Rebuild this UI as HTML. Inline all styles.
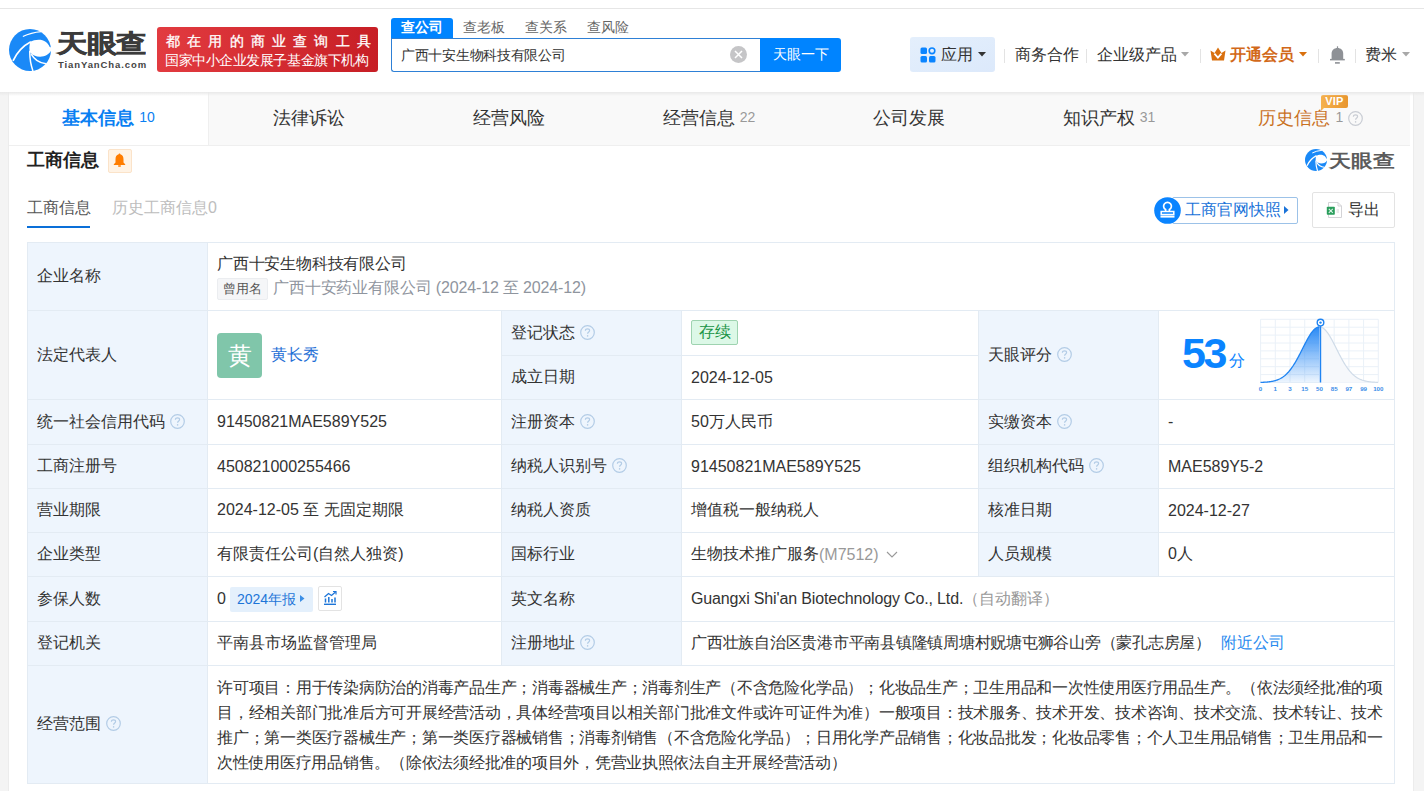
<!DOCTYPE html>
<html><head><meta charset="utf-8">
<style>
*{margin:0;padding:0;box-sizing:border-box}
html,body{width:1424px;height:791px;overflow:hidden}
body{background:#f4f4f4;font-family:"Liberation Sans",sans-serif;color:#333;position:relative}
.a{position:absolute;white-space:nowrap}
#hdr{position:absolute;left:0;top:0;width:1424px;height:92px;background:#fff;border-top:0}
#topline{position:absolute;left:0;top:8px;width:1424px;height:1px;background:#e6e6e6}
#card{position:absolute;left:9px;top:92px;width:1404px;height:699px;background:#fff}
#cardl{position:absolute;left:8px;top:92px;width:1px;height:699px;background:#ececec}
#cardr{position:absolute;left:1413px;top:92px;width:1px;height:699px;background:#ececec}
.shadow{position:absolute;left:0;top:92px;width:1424px;height:4px;background:linear-gradient(#e9e9e9,rgba(240,240,240,0))}
.tabs{position:absolute;left:9px;top:92px;width:1401px;height:54px;background:#f9f9f9;border-bottom:1px solid #efefef}
.tab{position:absolute;top:0;height:53px;width:200px;text-align:center;font-size:18px;line-height:53px;color:#333}
.tab .n{font-size:14px;color:#999;margin-left:5px;position:relative;top:-2px}
.cell{position:absolute;background:#fff}
.lab{background:#edf4fc}
.hl{position:absolute;height:1px;background:#e4ecf4}
.vl{position:absolute;width:1px;background:#e4ecf4}
.t16{font-size:16px;line-height:20px}
.q{display:inline-block;width:15px;height:15px;margin-left:5px;line-height:0;position:relative;top:-1px}
.q svg{display:block}
.c{position:absolute;display:flex;align-items:center;white-space:nowrap;font-size:16px;color:#333}
</style></head><body>
<div id="hdr">
 <svg class="a" style="left:9px;top:29px" width="42" height="42" viewBox="0 0 100 100">
  <circle cx="50" cy="50" r="50" fill="#1a89f7"/>
  <path d="M50.8 30.3 C60 26 76 22 88 31 C93 35 95 39 96.5 42 L100 44 L100 52 C96 60 86 66 74 66 C64 66 55 62 50.5 56 C47.5 50 48 40 50.8 30.3Z" fill="#fff"/>
  <path d="M9.5 76 Q24 45 52 30.5" stroke="#fff" stroke-width="4.0" fill="none"/>
  <path d="M33 18 Q52 8 77 6" stroke="#fff" stroke-width="3.0" fill="none"/>
  <path d="M49.5 52 Q49 78 57 100" stroke="#fff" stroke-width="3.6" fill="none"/>
  <path d="M53 60 Q64 80 88 83" stroke="#fff" stroke-width="3.6" fill="none"/>
 </svg>
 <div class="a" style="left:57px;top:24px;font-size:30px;line-height:40px;font-weight:bold;color:#3b3b3b;letter-spacing:-0.5px;-webkit-text-stroke:0.7px #3b3b3b;transform:scaleY(0.82);transform-origin:0 50%">天眼查</div>
 <div class="a" style="left:58px;top:59px;font-size:9.5px;line-height:12px;font-weight:bold;color:#444;letter-spacing:0.9px">TianYanCha.com</div>
 <div class="a" style="left:157px;top:27px;width:221px;height:45px;border-radius:3px;background:linear-gradient(90deg,#e23b40,#c71e25)"></div>
 <div class="a" style="left:166px;top:31px;font-size:14px;line-height:20px;color:#fff;letter-spacing:7.2px;-webkit-text-stroke:0.3px #fff">都在用的商业查询工具</div>
 <div class="a" style="left:165px;top:50px;font-size:14px;line-height:20px;color:#fff;letter-spacing:-0.45px">国家中小企业发展子基金旗下机构</div>
 <div class="a" style="left:391px;top:18px;width:62px;height:21px;background:#0084ff;border-radius:3px 3px 0 0"></div>
 <div class="a" style="left:401px;top:17px;font-size:14px;line-height:20px;color:#fff;font-weight:bold">查公司</div>
 <div class="a" style="left:463px;top:17px;font-size:14px;line-height:20px;color:#666">查老板</div>
 <div class="a" style="left:525px;top:17px;font-size:14px;line-height:20px;color:#666">查关系</div>
 <div class="a" style="left:587px;top:17px;font-size:14px;line-height:20px;color:#666">查风险</div>
 <div class="a" style="left:391px;top:38px;width:370px;height:34px;border:1px solid #2e80d6;border-right:0;border-radius:0 0 0 3px;background:#fff"></div>
 <div class="a" style="left:401px;top:45px;font-size:14px;line-height:20px;color:#333;letter-spacing:-0.3px">广西十安生物科技有限公司</div>
 <div class="a" style="left:730px;top:46px;width:17px;height:17px;border-radius:50%;background:#c5c5c7"></div>
 <svg class="a" style="left:730px;top:46px" width="17" height="17" viewBox="0 0 17 17"><path d="M5 5L12 12M12 5L5 12" stroke="#fff" stroke-width="1.5"/></svg>
 <div class="a" style="left:760px;top:38px;width:81px;height:34px;background:#0084ff;border-radius:0 3px 3px 0"></div>
 <div class="a" style="left:773px;top:44px;font-size:14px;line-height:20px;color:#fff">天眼一下</div>
 <div class="a" style="left:910px;top:37px;width:85px;height:35px;background:linear-gradient(160deg,#e4effc,#dce9fb);border-radius:3px"></div>
 <svg class="a" style="left:920px;top:47px" width="16" height="16" viewBox="0 0 16 16"><rect x="0.5" y="0.5" width="6.5" height="6.5" rx="1.5" fill="#0a84ff"/><circle cx="12" cy="3.8" r="2.8" fill="none" stroke="#0a84ff" stroke-width="1.6"/><rect x="0.5" y="9" width="6.5" height="6.5" rx="1.5" fill="#0a84ff"/><rect x="9" y="9" width="6.5" height="6.5" rx="1.5" fill="#0a84ff"/></svg>
 <div class="a" style="left:941px;top:44px;font-size:16px;line-height:22px;color:#333">应用</div>
 <svg class="a" style="left:978px;top:52px" width="8" height="5" viewBox="0 0 8 5"><path d="M0 0H8L4 4.5Z" fill="#333"/></svg>
 <div class="a" style="left:1004px;top:49px;width:1px;height:14px;background:#e3e3e3"></div>
 <div class="a" style="left:1015px;top:44px;font-size:16px;line-height:22px;color:#333">商务合作</div>
 <div class="a" style="left:1086px;top:49px;width:1px;height:14px;background:#e3e3e3"></div>
 <div class="a" style="left:1097px;top:44px;font-size:16px;line-height:22px;color:#333">企业级产品</div>
 <svg class="a" style="left:1181px;top:52px" width="8" height="5" viewBox="0 0 8 5"><path d="M0 0H8L4 4.5Z" fill="#a8a8a8"/></svg>
 <div class="a" style="left:1200px;top:49px;width:1px;height:14px;background:#e3e3e3"></div>
 <svg class="a" style="left:1210px;top:47px" width="16" height="14" viewBox="0 0 16 14"><path d="M0.5 3.5L4.5 6L8 0.5L11.5 6L15.5 3.5L14 13.5H2Z" fill="#d9700e"/><path d="M4.4 6.6L7.9 10.6L11.4 6.6" stroke="#fff" stroke-width="1.7" fill="none"/></svg>
 <div class="a" style="left:1230px;top:44px;font-size:16px;line-height:22px;color:#d2691a;font-weight:bold">开通会员</div>
 <svg class="a" style="left:1299px;top:52px" width="8" height="5" viewBox="0 0 8 5"><path d="M0 0H8L4 4.5Z" fill="#d9700e"/></svg>
 <div class="a" style="left:1318px;top:49px;width:1px;height:14px;background:#e3e3e3"></div>
 <svg class="a" style="left:1330px;top:46px" width="15" height="18" viewBox="0 0 15 18"><rect x="6.9" y="0.3" width="1.2" height="2.2" fill="#8e9196"/><path d="M1.6 13.2V7.5C1.6 4 4.2 1.9 7.5 1.9C10.8 1.9 13.2 4 13.2 7.5V13.2Z" fill="#8e9196"/><rect x="0" y="12.9" width="14.8" height="1.5" fill="#8e9196"/><rect x="5" y="16.1" width="4.8" height="1.6" fill="#8e9196"/></svg>
 <div class="a" style="left:1355px;top:49px;width:1px;height:14px;background:#e3e3e3"></div>
 <div class="a" style="left:1365px;top:44px;font-size:16px;line-height:22px;color:#333">费米</div>
 <svg class="a" style="left:1402px;top:52px" width="8" height="5" viewBox="0 0 8 5"><path d="M0 0H8L4 4.5Z" fill="#a8a8a8"/></svg>
</div>
<div id="topline"></div>
<div id="cardl"></div>
<div id="card"></div>
<div id="cardr"></div>
<div class="tabs">
  <div class="tab" style="left:0;width:199px;height:53px;background:#fff;color:#0a7ff2;font-weight:bold">基本信息<span class="n" style="color:#0a7ff2;font-weight:normal">10</span></div>
  <div class="a" style="left:199px;top:0;width:1px;height:53px;background:#efefef"></div>
  <div class="tab" style="left:200px">法律诉讼</div>
  <div class="tab" style="left:400px">经营风险</div>
  <div class="tab" style="left:600px">经营信息<span class="n">22</span></div>
  <div class="tab" style="left:800px">公司发展</div>
  <div class="tab" style="left:1000px">知识产权<span class="n">31</span></div>
  <div class="tab" style="left:1200px;color:#c9711f;padding-left:3px">历史信息<span class="n" style="margin-left:6px">1</span><svg style="margin-left:5px;vertical-align:-2px" width="15" height="15" viewBox="0 0 15 15"><circle cx="7.5" cy="7.5" r="6.8" fill="none" stroke="#c9cdd4" stroke-width="1.2"/><path d="M5.4 5.8C5.4 4.5 6.3 3.8 7.5 3.8C8.7 3.8 9.6 4.5 9.6 5.6C9.6 7 7.6 7 7.6 8.8" fill="none" stroke="#c9cdd4" stroke-width="1.2"/><circle cx="7.6" cy="10.9" r="0.8" fill="#c9cdd4"/></svg></div>
  <div class="a" style="left:1312px;top:3px;width:27px;height:13px;border-radius:2px 2px 2px 0;background:linear-gradient(90deg,#f5b14e,#e8962f)"></div><svg class="a" style="left:1312px;top:15px" width="4" height="4" viewBox="0 0 4 4"><path d="M0 0H4L0 4Z" fill="#f5b14e"/></svg>
  <div class="a" style="left:1312px;top:3px;width:27px;height:13px;font-size:11px;line-height:13px;text-align:center;color:#fff;font-weight:bold;letter-spacing:0.2px">VIP</div>
</div>
<div class="shadow"></div>
<div id="sec">
 <div class="a" style="left:27px;top:148px;font-size:18px;line-height:24px;font-weight:bold;color:#222">工商信息</div>
 <div class="a" style="left:108px;top:149px;width:24px;height:24px;background:#fff3e5;border:1px solid #fbe3c9;border-radius:2px"></div>
 <svg class="a" style="left:113px;top:153px" width="13" height="14" viewBox="0 0 13 14"><path d="M6.5 0.5C7.1 0.5 7.3 0.9 7.3 1.3C9.6 1.9 10.5 3.9 10.5 6.4V9.5L12.2 11.3V12H0.8V11.3L2.5 9.5V6.4C2.5 3.9 3.4 1.9 5.7 1.3C5.7 0.9 5.9 0.5 6.5 0.5Z" fill="#ff7d00"/><rect x="5" y="12.3" width="3" height="1.5" rx="0.7" fill="#ff7d00"/></svg>
 <div class="a" style="left:27px;top:197px;font-size:16px;line-height:22px;color:#555">工商信息</div>
 <div class="a" style="left:112px;top:197px;font-size:16px;line-height:22px;color:#bdbdbd">历史工商信息0</div>
 <div class="a" style="left:27px;top:226px;width:63px;height:2px;background:#0a6fd8"></div>
 <svg class="a" style="left:1305px;top:149px" width="22" height="22" viewBox="0 0 100 100">
  <circle cx="50" cy="50" r="50" fill="#1a89f7"/>
  <path d="M50.8 30.3 C60 26 76 22 88 31 C93 35 95 39 96.5 42 L100 44 L100 52 C96 60 86 66 74 66 C64 66 55 62 50.5 56 C47.5 50 48 40 50.8 30.3Z" fill="#fff"/>
  <path d="M9.5 76 Q24 45 52 30.5" stroke="#fff" stroke-width="6.0" fill="none"/>
  <path d="M33 18 Q52 8 77 6" stroke="#fff" stroke-width="4.5" fill="none"/>
  <path d="M49.5 52 Q49 78 57 100" stroke="#fff" stroke-width="5.4" fill="none"/>
  <path d="M53 60 Q64 80 88 83" stroke="#fff" stroke-width="5.4" fill="none"/>
 </svg>
 <div class="a" style="left:1329px;top:146px;font-size:22px;line-height:30px;font-weight:bold;color:#5c5c5c;transform:scaleY(0.82);transform-origin:0 50%">天眼查</div>
 <div class="a" style="left:1172px;top:197px;width:126px;height:27px;border:1px solid #9cc2e8;border-radius:2px;background:#fff"></div>
 <svg class="a" style="left:1154px;top:197px" width="27" height="27" viewBox="0 0 27 27"><circle cx="13.5" cy="13.5" r="13.3" fill="#0a84ff"/><path d="M11.6 14.2V12.6A3.9 3.9 0 1 1 15.4 12.6V14.2" fill="none" stroke="#fff" stroke-width="1.7"/><rect x="7.2" y="14.5" width="12.6" height="3" fill="none" stroke="#fff" stroke-width="1.5"/><rect x="6.5" y="18.6" width="14" height="2" fill="#fff"/></svg>
 <div class="a" style="left:1185px;top:199px;font-size:16px;line-height:22px;color:#1a73d9">工商官网快照</div>
 <svg class="a" style="left:1284px;top:206px" width="5" height="8" viewBox="0 0 5 8"><path d="M0 0L4.5 4L0 8Z" fill="#1a73d9"/></svg>
 <div class="a" style="left:1312px;top:192px;width:83px;height:36px;border:1px solid #e3e3e3;border-radius:2px;background:#fff"></div>
 <svg class="a" style="left:1326px;top:201px" width="16" height="18" viewBox="0 0 16 18"><path d="M2.5 1.5H12L15.5 5V16.5H2.5Z" fill="#fff" stroke="#d3d3d6"/><path d="M12 1.5V5H15.5" fill="none" stroke="#d3d3d6"/><rect x="0.8" y="5.8" width="8" height="8" rx="0.8" fill="#2a9e5c"/><path d="M2.8 7.8L6.8 11.8M6.8 7.8L2.8 11.8" stroke="#dff5e8" stroke-width="1.1"/><path d="M10.5 9H13M10.5 11H13" stroke="#d5d5d5" stroke-width="1.2"/></svg>
 <div class="a" style="left:1348px;top:199px;font-size:16px;line-height:22px;color:#333">导出</div>
</div>

<div id="tbl"><!--TABLE-->
<div class="a" style="left:27px;top:242px;width:180px;height:541px;background:#eef5fd"></div>
<div class="a" style="left:501px;top:310px;width:180px;height:355px;background:#eef5fd"></div>
<div class="a" style="left:978px;top:310px;width:180px;height:266px;background:#eef5fd"></div>
<div class="a" style="left:27px;top:242px;width:1368px;height:1px;background:#e3ebf3"></div>
<div class="a" style="left:27px;top:310px;width:1368px;height:1px;background:#e3ebf3"></div>
<div class="a" style="left:27px;top:399px;width:1368px;height:1px;background:#e3ebf3"></div>
<div class="a" style="left:27px;top:444px;width:1368px;height:1px;background:#e3ebf3"></div>
<div class="a" style="left:27px;top:488px;width:1368px;height:1px;background:#e3ebf3"></div>
<div class="a" style="left:27px;top:532px;width:1368px;height:1px;background:#e3ebf3"></div>
<div class="a" style="left:27px;top:576px;width:1368px;height:1px;background:#e3ebf3"></div>
<div class="a" style="left:27px;top:621px;width:1368px;height:1px;background:#e3ebf3"></div>
<div class="a" style="left:27px;top:665px;width:1368px;height:1px;background:#e3ebf3"></div>
<div class="a" style="left:27px;top:783px;width:1368px;height:1px;background:#e3ebf3"></div>
<div class="a" style="left:501px;top:355px;width:477px;height:1px;background:#e3ebf3"></div>
<div class="a" style="left:27px;top:242px;width:1px;height:541px;background:#e3ebf3"></div>
<div class="a" style="left:207px;top:242px;width:1px;height:541px;background:#e3ebf3"></div>
<div class="a" style="left:501px;top:310px;width:1px;height:355px;background:#e3ebf3"></div>
<div class="a" style="left:681px;top:310px;width:1px;height:355px;background:#e3ebf3"></div>
<div class="a" style="left:978px;top:310px;width:1px;height:266px;background:#e3ebf3"></div>
<div class="a" style="left:1158px;top:310px;width:1px;height:266px;background:#e3ebf3"></div>
<div class="a" style="left:1394px;top:242px;width:1px;height:542px;background:#e3ebf3"></div>
<div class="c" style="left:37px;top:243px;height:67px;">企业名称</div>
<div class="c" style="left:37px;top:311px;height:88px;">法定代表人</div>
<div class="c" style="left:37px;top:400px;height:44px;">统一社会信用代码<span class="q"><svg width="15" height="15" viewBox="0 0 15 15"><circle cx="7.5" cy="7.5" r="6.8" fill="none" stroke="#b3cce6" stroke-width="1.2"/><path d="M5.4 5.8C5.4 4.5 6.3 3.8 7.5 3.8C8.7 3.8 9.6 4.5 9.6 5.6C9.6 7 7.6 7 7.6 8.8" fill="none" stroke="#b3cce6" stroke-width="1.2"/><circle cx="7.6" cy="10.9" r="0.8" fill="#b3cce6"/></svg></span></div>
<div class="c" style="left:37px;top:445px;height:43px;">工商注册号</div>
<div class="c" style="left:37px;top:489px;height:43px;">营业期限</div>
<div class="c" style="left:37px;top:533px;height:43px;">企业类型</div>
<div class="c" style="left:37px;top:577px;height:44px;">参保人数</div>
<div class="c" style="left:37px;top:622px;height:43px;">登记机关</div>
<div class="c" style="left:37px;top:666px;height:117px;">经营范围<span class="q"><svg width="15" height="15" viewBox="0 0 15 15"><circle cx="7.5" cy="7.5" r="6.8" fill="none" stroke="#b3cce6" stroke-width="1.2"/><path d="M5.4 5.8C5.4 4.5 6.3 3.8 7.5 3.8C8.7 3.8 9.6 4.5 9.6 5.6C9.6 7 7.6 7 7.6 8.8" fill="none" stroke="#b3cce6" stroke-width="1.2"/><circle cx="7.6" cy="10.9" r="0.8" fill="#b3cce6"/></svg></span></div>
<div class="c" style="left:511px;top:311px;height:44px;">登记状态<span class="q"><svg width="15" height="15" viewBox="0 0 15 15"><circle cx="7.5" cy="7.5" r="6.8" fill="none" stroke="#b3cce6" stroke-width="1.2"/><path d="M5.4 5.8C5.4 4.5 6.3 3.8 7.5 3.8C8.7 3.8 9.6 4.5 9.6 5.6C9.6 7 7.6 7 7.6 8.8" fill="none" stroke="#b3cce6" stroke-width="1.2"/><circle cx="7.6" cy="10.9" r="0.8" fill="#b3cce6"/></svg></span></div>
<div class="c" style="left:511px;top:356px;height:43px;">成立日期</div>
<div class="c" style="left:511px;top:400px;height:44px;">注册资本<span class="q"><svg width="15" height="15" viewBox="0 0 15 15"><circle cx="7.5" cy="7.5" r="6.8" fill="none" stroke="#b3cce6" stroke-width="1.2"/><path d="M5.4 5.8C5.4 4.5 6.3 3.8 7.5 3.8C8.7 3.8 9.6 4.5 9.6 5.6C9.6 7 7.6 7 7.6 8.8" fill="none" stroke="#b3cce6" stroke-width="1.2"/><circle cx="7.6" cy="10.9" r="0.8" fill="#b3cce6"/></svg></span></div>
<div class="c" style="left:511px;top:445px;height:43px;">纳税人识别号<span class="q"><svg width="15" height="15" viewBox="0 0 15 15"><circle cx="7.5" cy="7.5" r="6.8" fill="none" stroke="#b3cce6" stroke-width="1.2"/><path d="M5.4 5.8C5.4 4.5 6.3 3.8 7.5 3.8C8.7 3.8 9.6 4.5 9.6 5.6C9.6 7 7.6 7 7.6 8.8" fill="none" stroke="#b3cce6" stroke-width="1.2"/><circle cx="7.6" cy="10.9" r="0.8" fill="#b3cce6"/></svg></span></div>
<div class="c" style="left:511px;top:489px;height:43px;">纳税人资质</div>
<div class="c" style="left:511px;top:533px;height:43px;">国标行业</div>
<div class="c" style="left:511px;top:577px;height:44px;">英文名称</div>
<div class="c" style="left:511px;top:622px;height:43px;">注册地址<span class="q"><svg width="15" height="15" viewBox="0 0 15 15"><circle cx="7.5" cy="7.5" r="6.8" fill="none" stroke="#b3cce6" stroke-width="1.2"/><path d="M5.4 5.8C5.4 4.5 6.3 3.8 7.5 3.8C8.7 3.8 9.6 4.5 9.6 5.6C9.6 7 7.6 7 7.6 8.8" fill="none" stroke="#b3cce6" stroke-width="1.2"/><circle cx="7.6" cy="10.9" r="0.8" fill="#b3cce6"/></svg></span></div>
<div class="c" style="left:988px;top:311px;height:88px;">天眼评分<span class="q"><svg width="15" height="15" viewBox="0 0 15 15"><circle cx="7.5" cy="7.5" r="6.8" fill="none" stroke="#b3cce6" stroke-width="1.2"/><path d="M5.4 5.8C5.4 4.5 6.3 3.8 7.5 3.8C8.7 3.8 9.6 4.5 9.6 5.6C9.6 7 7.6 7 7.6 8.8" fill="none" stroke="#b3cce6" stroke-width="1.2"/><circle cx="7.6" cy="10.9" r="0.8" fill="#b3cce6"/></svg></span></div>
<div class="c" style="left:988px;top:400px;height:44px;">实缴资本<span class="q"><svg width="15" height="15" viewBox="0 0 15 15"><circle cx="7.5" cy="7.5" r="6.8" fill="none" stroke="#b3cce6" stroke-width="1.2"/><path d="M5.4 5.8C5.4 4.5 6.3 3.8 7.5 3.8C8.7 3.8 9.6 4.5 9.6 5.6C9.6 7 7.6 7 7.6 8.8" fill="none" stroke="#b3cce6" stroke-width="1.2"/><circle cx="7.6" cy="10.9" r="0.8" fill="#b3cce6"/></svg></span></div>
<div class="c" style="left:988px;top:445px;height:43px;">组织机构代码<span class="q"><svg width="15" height="15" viewBox="0 0 15 15"><circle cx="7.5" cy="7.5" r="6.8" fill="none" stroke="#b3cce6" stroke-width="1.2"/><path d="M5.4 5.8C5.4 4.5 6.3 3.8 7.5 3.8C8.7 3.8 9.6 4.5 9.6 5.6C9.6 7 7.6 7 7.6 8.8" fill="none" stroke="#b3cce6" stroke-width="1.2"/><circle cx="7.6" cy="10.9" r="0.8" fill="#b3cce6"/></svg></span></div>
<div class="c" style="left:988px;top:489px;height:43px;">核准日期</div>
<div class="c" style="left:988px;top:533px;height:43px;">人员规模</div>
<div class="c" style="left:217px;top:400px;height:44px;">91450821MAE589Y525</div>
<div class="c" style="left:217px;top:445px;height:43px;">450821000255466</div>
<div class="c" style="left:217px;top:489px;height:43px;">2024-12-05 至 无固定期限</div>
<div class="c" style="left:217px;top:533px;height:43px;">有限责任公司(自然人独资)</div>
<div class="c" style="left:217px;top:622px;height:43px;">平南县市场监督管理局</div>
<div class="c" style="left:691px;top:400px;height:44px;">50万人民币</div>
<div class="c" style="left:691px;top:445px;height:43px;">91450821MAE589Y525</div>
<div class="c" style="left:691px;top:489px;height:43px;">增值税一般纳税人</div>
<div class="c" style="left:691px;top:533px;height:43px;">生物技术推广服务<span style="color:#999"> (M7512)</span><svg style="margin-left:7px" width="12" height="7" viewBox="0 0 12 7"><path d="M1 1L6 6L11 1" fill="none" stroke="#999" stroke-width="1.1"/></svg></div>
<div class="c" style="left:691px;top:577px;height:44px;"><span style="letter-spacing:-0.15px">Guangxi Shi'an Biotechnology Co., Ltd.</span><span style="color:#999"> （自动翻译）</span></div>
<div class="c" style="left:691px;top:622px;height:43px;"><span style="letter-spacing:-0.25px">广西壮族自治区贵港市平南县镇隆镇周塘村贶塘屯狮谷山旁（蒙孔志房屋）</span><span style="color:#2a8bef;margin-left:10px">附近公司</span></div>
<div class="c" style="left:691px;top:356px;height:43px;">2024-12-05</div>
<div class="c" style="left:1168px;top:400px;height:44px;">-</div>
<div class="c" style="left:1168px;top:445px;height:43px;">MAE589Y5-2</div>
<div class="c" style="left:1168px;top:489px;height:43px;">2024-12-27</div>
<div class="c" style="left:1168px;top:533px;height:43px;">0人</div>
<div class="a" style="left:217px;top:253px;font-size:16px;line-height:22px;color:#333;letter-spacing:-0.2px">广西十安生物科技有限公司</div>
<div class="a" style="left:217px;top:278px;width:51px;height:22px;background:#f5f6f8;border:1px solid #ebedf0;border-radius:2px"></div>
<div class="a" style="left:223px;top:279px;font-size:13px;line-height:19px;color:#555">曾用名</div>
<div class="a" style="left:273px;top:277px;font-size:16px;line-height:22px;color:#8f959e;letter-spacing:-0.15px">广西十安药业有限公司 (2024-12 至 2024-12)</div>
<div class="a" style="left:217px;top:333px;width:45px;height:45px;background:#80c6aa;border-radius:4px"></div>
<div class="a" style="left:217px;top:333px;width:45px;height:45px;font-size:24px;line-height:45px;text-align:center;color:#fff">黄</div>
<div class="a" style="left:271px;top:344px;font-size:16px;line-height:22px;color:#1f70d6">黄长秀</div>
<div class="a" style="left:691px;top:320px;width:47px;height:25px;background:#dcf8e7;border:1px solid #9ed3b0;border-radius:2px"></div>
<div class="a" style="left:691px;top:320px;width:47px;height:25px;font-size:16px;line-height:24px;text-align:center;color:#1c9547">存续</div>
<div class="a" style="left:1182px;top:330px;font-size:43px;line-height:46px;font-weight:bold;color:#0a84ff;letter-spacing:-2.5px">53</div>
<div class="a" style="left:1229px;top:351px;font-size:16px;line-height:20px;color:#0a84ff">分</div>
<div class="a" style="left:217px;top:588px;font-size:16px;line-height:22px;color:#333">0</div>
<div class="a" style="left:230px;top:587px;width:83px;height:25px;background:#e4f0fc;border-radius:2px"></div>
<div class="a" style="left:237px;top:588px;font-size:14px;line-height:22px;color:#1d75d8">2024年报</div>
<svg class="a" style="left:300px;top:595px" width="5" height="7" viewBox="0 0 5 7"><path d="M0 0L4.5 3.5L0 7Z" fill="#3a8ee6"/></svg>
<div class="a" style="left:318px;top:586px;width:24px;height:25px;border:1px solid #e3e3e3;border-radius:2px;background:#fff"></div>
<svg class="a" style="left:323px;top:591px" width="14" height="14" viewBox="0 0 14 14"><path d="M1 13.3H13" stroke="#1d75d8" stroke-width="1.4"/><path d="M2.5 11.5V7.5M5.8 11.5V6M9 11.5V8M12 11.5V6.5" stroke="#1d75d8" stroke-width="1.5"/><path d="M1.5 6L5.5 2.5L8.5 4.5L12.5 1" fill="none" stroke="#1d75d8" stroke-width="1.3"/><path d="M10 0.5H13V3.5" fill="none" stroke="#1d75d8" stroke-width="1.2"/></svg>
<div class="a" style="left:217px;top:675px;width:1166px;font-size:16px;line-height:25px;color:#333;white-space:nowrap;letter-spacing:-0.26px;text-align:justify;text-align-last:justify;">许可项目：用于传染病防治的消毒产品生产；消毒器械生产；消毒剂生产（不含危险化学品）；化妆品生产；卫生用品和一次性使用医疗用品生产。（依法须经批准的项</div>
<div class="a" style="left:217px;top:700px;width:1166px;font-size:16px;line-height:25px;color:#333;white-space:nowrap;letter-spacing:-0.26px;text-align:justify;text-align-last:justify;">目，经相关部门批准后方可开展经营活动，具体经营项目以相关部门批准文件或许可证件为准）一般项目：技术服务、技术开发、技术咨询、技术交流、技术转让、技术</div>
<div class="a" style="left:217px;top:725px;width:1166px;font-size:16px;line-height:25px;color:#333;white-space:nowrap;letter-spacing:-0.26px;text-align:justify;text-align-last:justify;">推广；第一类医疗器械生产；第一类医疗器械销售；消毒剂销售（不含危险化学品）；日用化学产品销售；化妆品批发；化妆品零售；个人卫生用品销售；卫生用品和一</div>
<div class="a" style="left:217px;top:750px;width:1166px;font-size:16px;line-height:25px;color:#333;white-space:nowrap;letter-spacing:-0.26px;">次性使用医疗用品销售。（除依法须经批准的项目外，凭营业执照依法自主开展经营活动）</div>
<svg class="a" style="left:1258px;top:316px" width="130" height="80" viewBox="0 0 130 80"><defs><linearGradient id="gf" x1="0" y1="0" x2="0" y2="1"><stop offset="0" stop-color="#2a8af5"/><stop offset="1" stop-color="#2a8af5" stop-opacity="0.08"/></linearGradient></defs><path d="M2.60 3.3V66.5 M2.6 3.30H120.3 M17.31 3.3V66.5 M2.6 11.20H120.3 M32.02 3.3V66.5 M2.6 19.10H120.3 M46.74 3.3V66.5 M2.6 27.00H120.3 M61.45 3.3V66.5 M2.6 34.90H120.3 M76.16 3.3V66.5 M2.6 42.80H120.3 M90.88 3.3V66.5 M2.6 50.70H120.3 M105.59 3.3V66.5 M2.6 58.60H120.3 M120.30 3.3V66.5 M2.6 66.50H120.3" stroke="#eaf1f8" stroke-width="1" fill="none"/><path d="M61.50 10.90 L62.00 10.92 L62.50 11.00 L63.00 11.12 L63.50 11.28 L64.00 11.50 L64.50 11.76 L65.00 12.07 L65.50 12.42 L66.00 12.81 L66.50 13.25 L67.00 13.74 L67.50 14.26 L68.00 14.82 L68.50 15.42 L69.00 16.06 L69.50 16.73 L70.00 17.43 L70.50 18.17 L71.00 18.94 L71.50 19.73 L72.00 20.56 L72.50 21.40 L73.00 22.27 L73.50 23.16 L74.00 24.07 L74.50 25.00 L75.00 25.94 L75.50 26.89 L76.00 27.85 L76.50 28.83 L77.00 29.81 L77.50 30.80 L78.00 31.79 L78.50 32.78 L79.00 33.77 L79.50 34.76 L80.00 35.74 L80.50 36.73 L81.00 37.70 L81.50 38.67 L82.00 39.63 L82.50 40.58 L83.00 41.51 L83.50 42.43 L84.00 43.34 L84.50 44.24 L85.00 45.11 L85.50 45.98 L86.00 46.82 L86.50 47.64 L87.00 48.45 L87.50 49.24 L88.00 50.00 L88.50 50.75 L89.00 51.47 L89.50 52.18 L90.00 52.86 L90.50 53.52 L91.00 54.16 L91.50 54.78 L92.00 55.38 L92.50 55.96 L93.00 56.51 L93.50 57.04 L94.00 57.56 L94.50 58.05 L95.00 58.52 L95.50 58.98 L96.00 59.41 L96.50 59.82 L97.00 60.22 L97.50 60.59 L98.00 60.95 L98.50 61.29 L99.00 61.62 L99.50 61.93 L100.00 62.22 L100.50 62.50 L101.00 62.76 L101.50 63.01 L102.00 63.24 L102.50 63.47 L103.00 63.67 L103.50 63.87 L104.00 64.06 L104.50 64.23 L105.00 64.39 L105.50 64.55 L106.00 64.69 L106.50 64.83 L107.00 64.95 L107.50 65.07 L108.00 65.18 L108.50 65.28 L109.00 65.38 L109.50 65.47 L110.00 65.55 L110.50 65.63 L111.00 65.70 L111.50 65.76 L112.00 65.83 L112.50 65.88 L113.00 65.93 L113.50 65.98 L114.00 66.03 L114.50 66.07 L115.00 66.11 L115.50 66.14 L116.00 66.17 L116.50 66.20 L117.00 66.23 L117.50 66.26 L118.00 66.28 L118.50 66.30 L119.00 66.32 L119.50 66.34 L120.00 66.35 L120.3 66.5 L61.5 66.5Z" fill="#f6f8fb"/><path d="M61.50 10.90 L62.00 10.92 L62.50 11.00 L63.00 11.12 L63.50 11.28 L64.00 11.50 L64.50 11.76 L65.00 12.07 L65.50 12.42 L66.00 12.81 L66.50 13.25 L67.00 13.74 L67.50 14.26 L68.00 14.82 L68.50 15.42 L69.00 16.06 L69.50 16.73 L70.00 17.43 L70.50 18.17 L71.00 18.94 L71.50 19.73 L72.00 20.56 L72.50 21.40 L73.00 22.27 L73.50 23.16 L74.00 24.07 L74.50 25.00 L75.00 25.94 L75.50 26.89 L76.00 27.85 L76.50 28.83 L77.00 29.81 L77.50 30.80 L78.00 31.79 L78.50 32.78 L79.00 33.77 L79.50 34.76 L80.00 35.74 L80.50 36.73 L81.00 37.70 L81.50 38.67 L82.00 39.63 L82.50 40.58 L83.00 41.51 L83.50 42.43 L84.00 43.34 L84.50 44.24 L85.00 45.11 L85.50 45.98 L86.00 46.82 L86.50 47.64 L87.00 48.45 L87.50 49.24 L88.00 50.00 L88.50 50.75 L89.00 51.47 L89.50 52.18 L90.00 52.86 L90.50 53.52 L91.00 54.16 L91.50 54.78 L92.00 55.38 L92.50 55.96 L93.00 56.51 L93.50 57.04 L94.00 57.56 L94.50 58.05 L95.00 58.52 L95.50 58.98 L96.00 59.41 L96.50 59.82 L97.00 60.22 L97.50 60.59 L98.00 60.95 L98.50 61.29 L99.00 61.62 L99.50 61.93 L100.00 62.22 L100.50 62.50 L101.00 62.76 L101.50 63.01 L102.00 63.24 L102.50 63.47 L103.00 63.67 L103.50 63.87 L104.00 64.06 L104.50 64.23 L105.00 64.39 L105.50 64.55 L106.00 64.69 L106.50 64.83 L107.00 64.95 L107.50 65.07 L108.00 65.18 L108.50 65.28 L109.00 65.38 L109.50 65.47 L110.00 65.55 L110.50 65.63 L111.00 65.70 L111.50 65.76 L112.00 65.83 L112.50 65.88 L113.00 65.93 L113.50 65.98 L114.00 66.03 L114.50 66.07 L115.00 66.11 L115.50 66.14 L116.00 66.17 L116.50 66.20 L117.00 66.23 L117.50 66.26 L118.00 66.28 L118.50 66.30 L119.00 66.32 L119.50 66.34 L120.00 66.35" stroke="#cfdbe8" stroke-width="1.2" fill="none"/><path d="M2.50 66.37 L3.00 66.35 L3.50 66.34 L4.00 66.32 L4.50 66.30 L5.00 66.28 L5.50 66.26 L6.00 66.23 L6.50 66.20 L7.00 66.17 L7.50 66.14 L8.00 66.11 L8.50 66.07 L9.00 66.03 L9.50 65.98 L10.00 65.93 L10.50 65.88 L11.00 65.83 L11.50 65.76 L12.00 65.70 L12.50 65.63 L13.00 65.55 L13.50 65.47 L14.00 65.38 L14.50 65.28 L15.00 65.18 L15.50 65.07 L16.00 64.95 L16.50 64.83 L17.00 64.69 L17.50 64.55 L18.00 64.39 L18.50 64.23 L19.00 64.06 L19.50 63.87 L20.00 63.67 L20.50 63.47 L21.00 63.24 L21.50 63.01 L22.00 62.76 L22.50 62.50 L23.00 62.22 L23.50 61.93 L24.00 61.62 L24.50 61.29 L25.00 60.95 L25.50 60.59 L26.00 60.22 L26.50 59.82 L27.00 59.41 L27.50 58.98 L28.00 58.52 L28.50 58.05 L29.00 57.56 L29.50 57.04 L30.00 56.51 L30.50 55.96 L31.00 55.38 L31.50 54.78 L32.00 54.16 L32.50 53.52 L33.00 52.86 L33.50 52.18 L34.00 51.47 L34.50 50.75 L35.00 50.00 L35.50 49.24 L36.00 48.45 L36.50 47.64 L37.00 46.82 L37.50 45.98 L38.00 45.11 L38.50 44.24 L39.00 43.34 L39.50 42.43 L40.00 41.51 L40.50 40.58 L41.00 39.63 L41.50 38.67 L42.00 37.70 L42.50 36.73 L43.00 35.74 L43.50 34.76 L44.00 33.77 L44.50 32.78 L45.00 31.79 L45.50 30.80 L46.00 29.81 L46.50 28.83 L47.00 27.85 L47.50 26.89 L48.00 25.94 L48.50 25.00 L49.00 24.07 L49.50 23.16 L50.00 22.27 L50.50 21.40 L51.00 20.56 L51.50 19.73 L52.00 18.94 L52.50 18.17 L53.00 17.43 L53.50 16.73 L54.00 16.06 L54.50 15.42 L55.00 14.82 L55.50 14.26 L56.00 13.74 L56.50 13.25 L57.00 12.81 L57.50 12.42 L58.00 12.07 L58.50 11.76 L59.00 11.50 L59.50 11.28 L60.00 11.12 L60.50 11.00 L61.00 10.92 L61.50 10.90 L61.5 66.5 L2.6 66.5Z" fill="url(#gf)"/><path d="M2.50 66.37 L3.00 66.35 L3.50 66.34 L4.00 66.32 L4.50 66.30 L5.00 66.28 L5.50 66.26 L6.00 66.23 L6.50 66.20 L7.00 66.17 L7.50 66.14 L8.00 66.11 L8.50 66.07 L9.00 66.03 L9.50 65.98 L10.00 65.93 L10.50 65.88 L11.00 65.83 L11.50 65.76 L12.00 65.70 L12.50 65.63 L13.00 65.55 L13.50 65.47 L14.00 65.38 L14.50 65.28 L15.00 65.18 L15.50 65.07 L16.00 64.95 L16.50 64.83 L17.00 64.69 L17.50 64.55 L18.00 64.39 L18.50 64.23 L19.00 64.06 L19.50 63.87 L20.00 63.67 L20.50 63.47 L21.00 63.24 L21.50 63.01 L22.00 62.76 L22.50 62.50 L23.00 62.22 L23.50 61.93 L24.00 61.62 L24.50 61.29 L25.00 60.95 L25.50 60.59 L26.00 60.22 L26.50 59.82 L27.00 59.41 L27.50 58.98 L28.00 58.52 L28.50 58.05 L29.00 57.56 L29.50 57.04 L30.00 56.51 L30.50 55.96 L31.00 55.38 L31.50 54.78 L32.00 54.16 L32.50 53.52 L33.00 52.86 L33.50 52.18 L34.00 51.47 L34.50 50.75 L35.00 50.00 L35.50 49.24 L36.00 48.45 L36.50 47.64 L37.00 46.82 L37.50 45.98 L38.00 45.11 L38.50 44.24 L39.00 43.34 L39.50 42.43 L40.00 41.51 L40.50 40.58 L41.00 39.63 L41.50 38.67 L42.00 37.70 L42.50 36.73 L43.00 35.74 L43.50 34.76 L44.00 33.77 L44.50 32.78 L45.00 31.79 L45.50 30.80 L46.00 29.81 L46.50 28.83 L47.00 27.85 L47.50 26.89 L48.00 25.94 L48.50 25.00 L49.00 24.07 L49.50 23.16 L50.00 22.27 L50.50 21.40 L51.00 20.56 L51.50 19.73 L52.00 18.94 L52.50 18.17 L53.00 17.43 L53.50 16.73 L54.00 16.06 L54.50 15.42 L55.00 14.82 L55.50 14.26 L56.00 13.74 L56.50 13.25 L57.00 12.81 L57.50 12.42 L58.00 12.07 L58.50 11.76 L59.00 11.50 L59.50 11.28 L60.00 11.12 L60.50 11.00 L61.00 10.92 L61.50 10.90" stroke="#1f84f2" stroke-width="1.3" fill="none"/><path d="M62.5 66.5V7" stroke="#1f84f2" stroke-width="1.4"/><circle cx="62.5" cy="6.6" r="3.3" fill="#fff" stroke="#1f84f2" stroke-width="1.4"/><circle cx="62.5" cy="6.6" r="1.2" fill="#1f84f2"/><text x="2.60" y="74.5" font-size="6.2" font-weight="bold" text-anchor="middle" fill="#3d8ee8" font-family="Liberation Sans">0</text><text x="17.31" y="74.5" font-size="6.2" font-weight="bold" text-anchor="middle" fill="#3d8ee8" font-family="Liberation Sans">1</text><text x="32.02" y="74.5" font-size="6.2" font-weight="bold" text-anchor="middle" fill="#3d8ee8" font-family="Liberation Sans">3</text><text x="46.74" y="74.5" font-size="6.2" font-weight="bold" text-anchor="middle" fill="#3d8ee8" font-family="Liberation Sans">15</text><text x="61.45" y="74.5" font-size="6.2" font-weight="bold" text-anchor="middle" fill="#3d8ee8" font-family="Liberation Sans">50</text><text x="76.16" y="74.5" font-size="6.2" font-weight="bold" text-anchor="middle" fill="#3d8ee8" font-family="Liberation Sans">85</text><text x="90.88" y="74.5" font-size="6.2" font-weight="bold" text-anchor="middle" fill="#3d8ee8" font-family="Liberation Sans">97</text><text x="105.59" y="74.5" font-size="6.2" font-weight="bold" text-anchor="middle" fill="#3d8ee8" font-family="Liberation Sans">99</text><text x="120.30" y="74.5" font-size="6.2" font-weight="bold" text-anchor="middle" fill="#3d8ee8" font-family="Liberation Sans">100</text></svg>
<!--/TABLE--></div>
</body></html>
